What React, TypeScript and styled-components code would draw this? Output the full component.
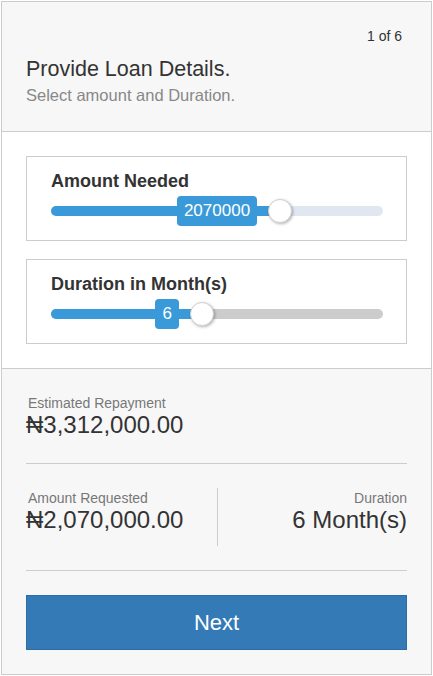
import styled, { createGlobalStyle } from "styled-components";

const GlobalStyle = createGlobalStyle`
  body {
    margin: 0;
    font-family: "Liberation Sans", Arial, sans-serif;
    color: #333;
  }
  * {
    box-sizing: border-box;
  }
`;

type SliderProps = {
  value: number;
  min: number;
  max: number;
  rest: string;
};

const Slider = ({ value, min, max, rest }: SliderProps) => {
  const pct = ((value - min) / (max - min)) * 100;
  return (
    <SliderStyle>
      <Track rest={rest}>
        <Fill style={{ width: `${pct}%` }} />
      </Track>
      <Bubble style={{ right: `calc(${100 - pct}% + 23px)` }}>{value}</Bubble>
      <Thumb style={{ left: `${pct}%` }} />
    </SliderStyle>
  );
};

const App = () => {
  return (
    <>
      <GlobalStyle />
      <Panel>
        <Header>
          <Step>1 of 6</Step>
          <Title>Provide Loan Details.</Title>
          <Subtitle>Select amount and Duration.</Subtitle>
        </Header>

        <Body>
          <Card>
            <CardLabel>Amount Needed</CardLabel>
            <Slider value={2070000} min={0} max={3000000} rest="#e1e7f0" />
          </Card>
          <Card>
            <CardLabel>Duration in Month(s)</CardLabel>
            <Slider value={6} min={1} max={12} rest="#cccccc" />
          </Card>
        </Body>

        <Summary>
          <SmallLabel>Estimated Repayment</SmallLabel>
          <Amount>₦3,312,000.00</Amount>
          <Divider />
          <SplitRow>
            <Column>
              <SmallLabel>Amount Requested</SmallLabel>
              <Amount>₦2,070,000.00</Amount>
            </Column>
            <Column align="right">
              <SmallLabel>Duration</SmallLabel>
              <Amount>6 Month(s)</Amount>
            </Column>
          </SplitRow>
          <Divider />
          <NextButton>Next</NextButton>
        </Summary>
      </Panel>
    </>
  );
};

export default App;

const Panel = styled.div`
  margin: 1px;
  width: 431px;
  height: 674px;
  border: 1px solid #ccc;
  display: flex;
  flex-direction: column;
`;

const Header = styled.div`
  background: #f7f7f7;
  border-bottom: 1px solid #ccc;
  padding: 24px 29px 26px 24px;
  display: flex;
  flex-direction: column;
`;

const Step = styled.div`
  align-self: flex-end;
  font-size: 14px;
  line-height: 20px;
  color: #333;
`;

const Title = styled.h1`
  margin: 10px 0 0 0;
  font-size: 21.5px;
  line-height: 26px;
  font-weight: 400;
  color: #333;
`;

const Subtitle = styled.p`
  margin: 3px 0 0 0;
  font-size: 16.5px;
  line-height: 20px;
  color: #888;
`;

const Body = styled.div`
  background: #fff;
  border-bottom: 1px solid #ccc;
  padding: 24px;
  display: flex;
  flex-direction: column;
  gap: 18px;
`;

const Card = styled.div`
  border: 1px solid #ccc;
  height: 85px;
  padding: 14px 23px 0 24px;
`;

const CardLabel = styled.div`
  font-size: 18px;
  line-height: 20px;
  font-weight: 700;
  color: #333;
`;

const SliderStyle = styled.div`
  position: relative;
  margin-top: 5px;
  height: 30px;
  display: flex;
  align-items: center;
`;

const Track = styled.div<{ rest: string }>`
  width: 100%;
  height: 10px;
  border-radius: 5px;
  background: ${({ rest }) => rest};
  overflow: hidden;
`;

const Fill = styled.div`
  height: 100%;
  background: #3a9ad9;
`;

const Thumb = styled.div`
  position: absolute;
  top: 3px;
  width: 24px;
  height: 24px;
  margin-left: -12px;
  border-radius: 50%;
  background: #fff;
  border: 1px solid #d0d0d0;
  box-shadow: 1px 1px 3px rgba(0, 0, 0, 0.3);
`;

const Bubble = styled.div`
  position: absolute;
  top: 0;
  height: 30px;
  padding: 0 7px;
  border-radius: 4px;
  background: #3a9ad9;
  color: #fff;
  font-size: 17px;
  line-height: 30px;
  white-space: nowrap;
`;

const Summary = styled.div`
  flex: 1;
  background: #f7f7f7;
  padding: 26px 24px 23px 24px;
  display: flex;
  flex-direction: column;
`;

const SmallLabel = styled.div`
  font-size: 14px;
  line-height: 16px;
  color: #777;
  padding: 0 2px;
`;

const Amount = styled.div`
  font-size: 24px;
  line-height: 28px;
  color: #333;
`;

const Divider = styled.hr`
  margin: 24px 0 0 0;
  border: 0;
  border-top: 1px solid #ccc;
  height: 0;
`;

const SplitRow = styled.div`
  margin-top: 24px;
  display: grid;
  grid-template-columns: 1fr 1fr;
`;

const Column = styled.div<{ align?: "left" | "right" }>`
  padding: 2px 0 12px 0;
  text-align: ${({ align }) => align ?? "left"};
  border-left: ${({ align }) => (align === "right" ? "1px solid #ccc" : "0")};
  ${SmallLabel} {
    padding: ${({ align }) => (align === "right" ? "0" : "0 2px")};
  }
`;

const NextButton = styled.button`
  margin-top: 24px;
  height: 55px;
  width: 100%;
  background: #337ab7;
  border: 1px solid #2e6da4;
  color: #fff;
  font-family: "Liberation Sans", Arial, sans-serif;
  font-size: 22px;
  cursor: pointer;
`;
